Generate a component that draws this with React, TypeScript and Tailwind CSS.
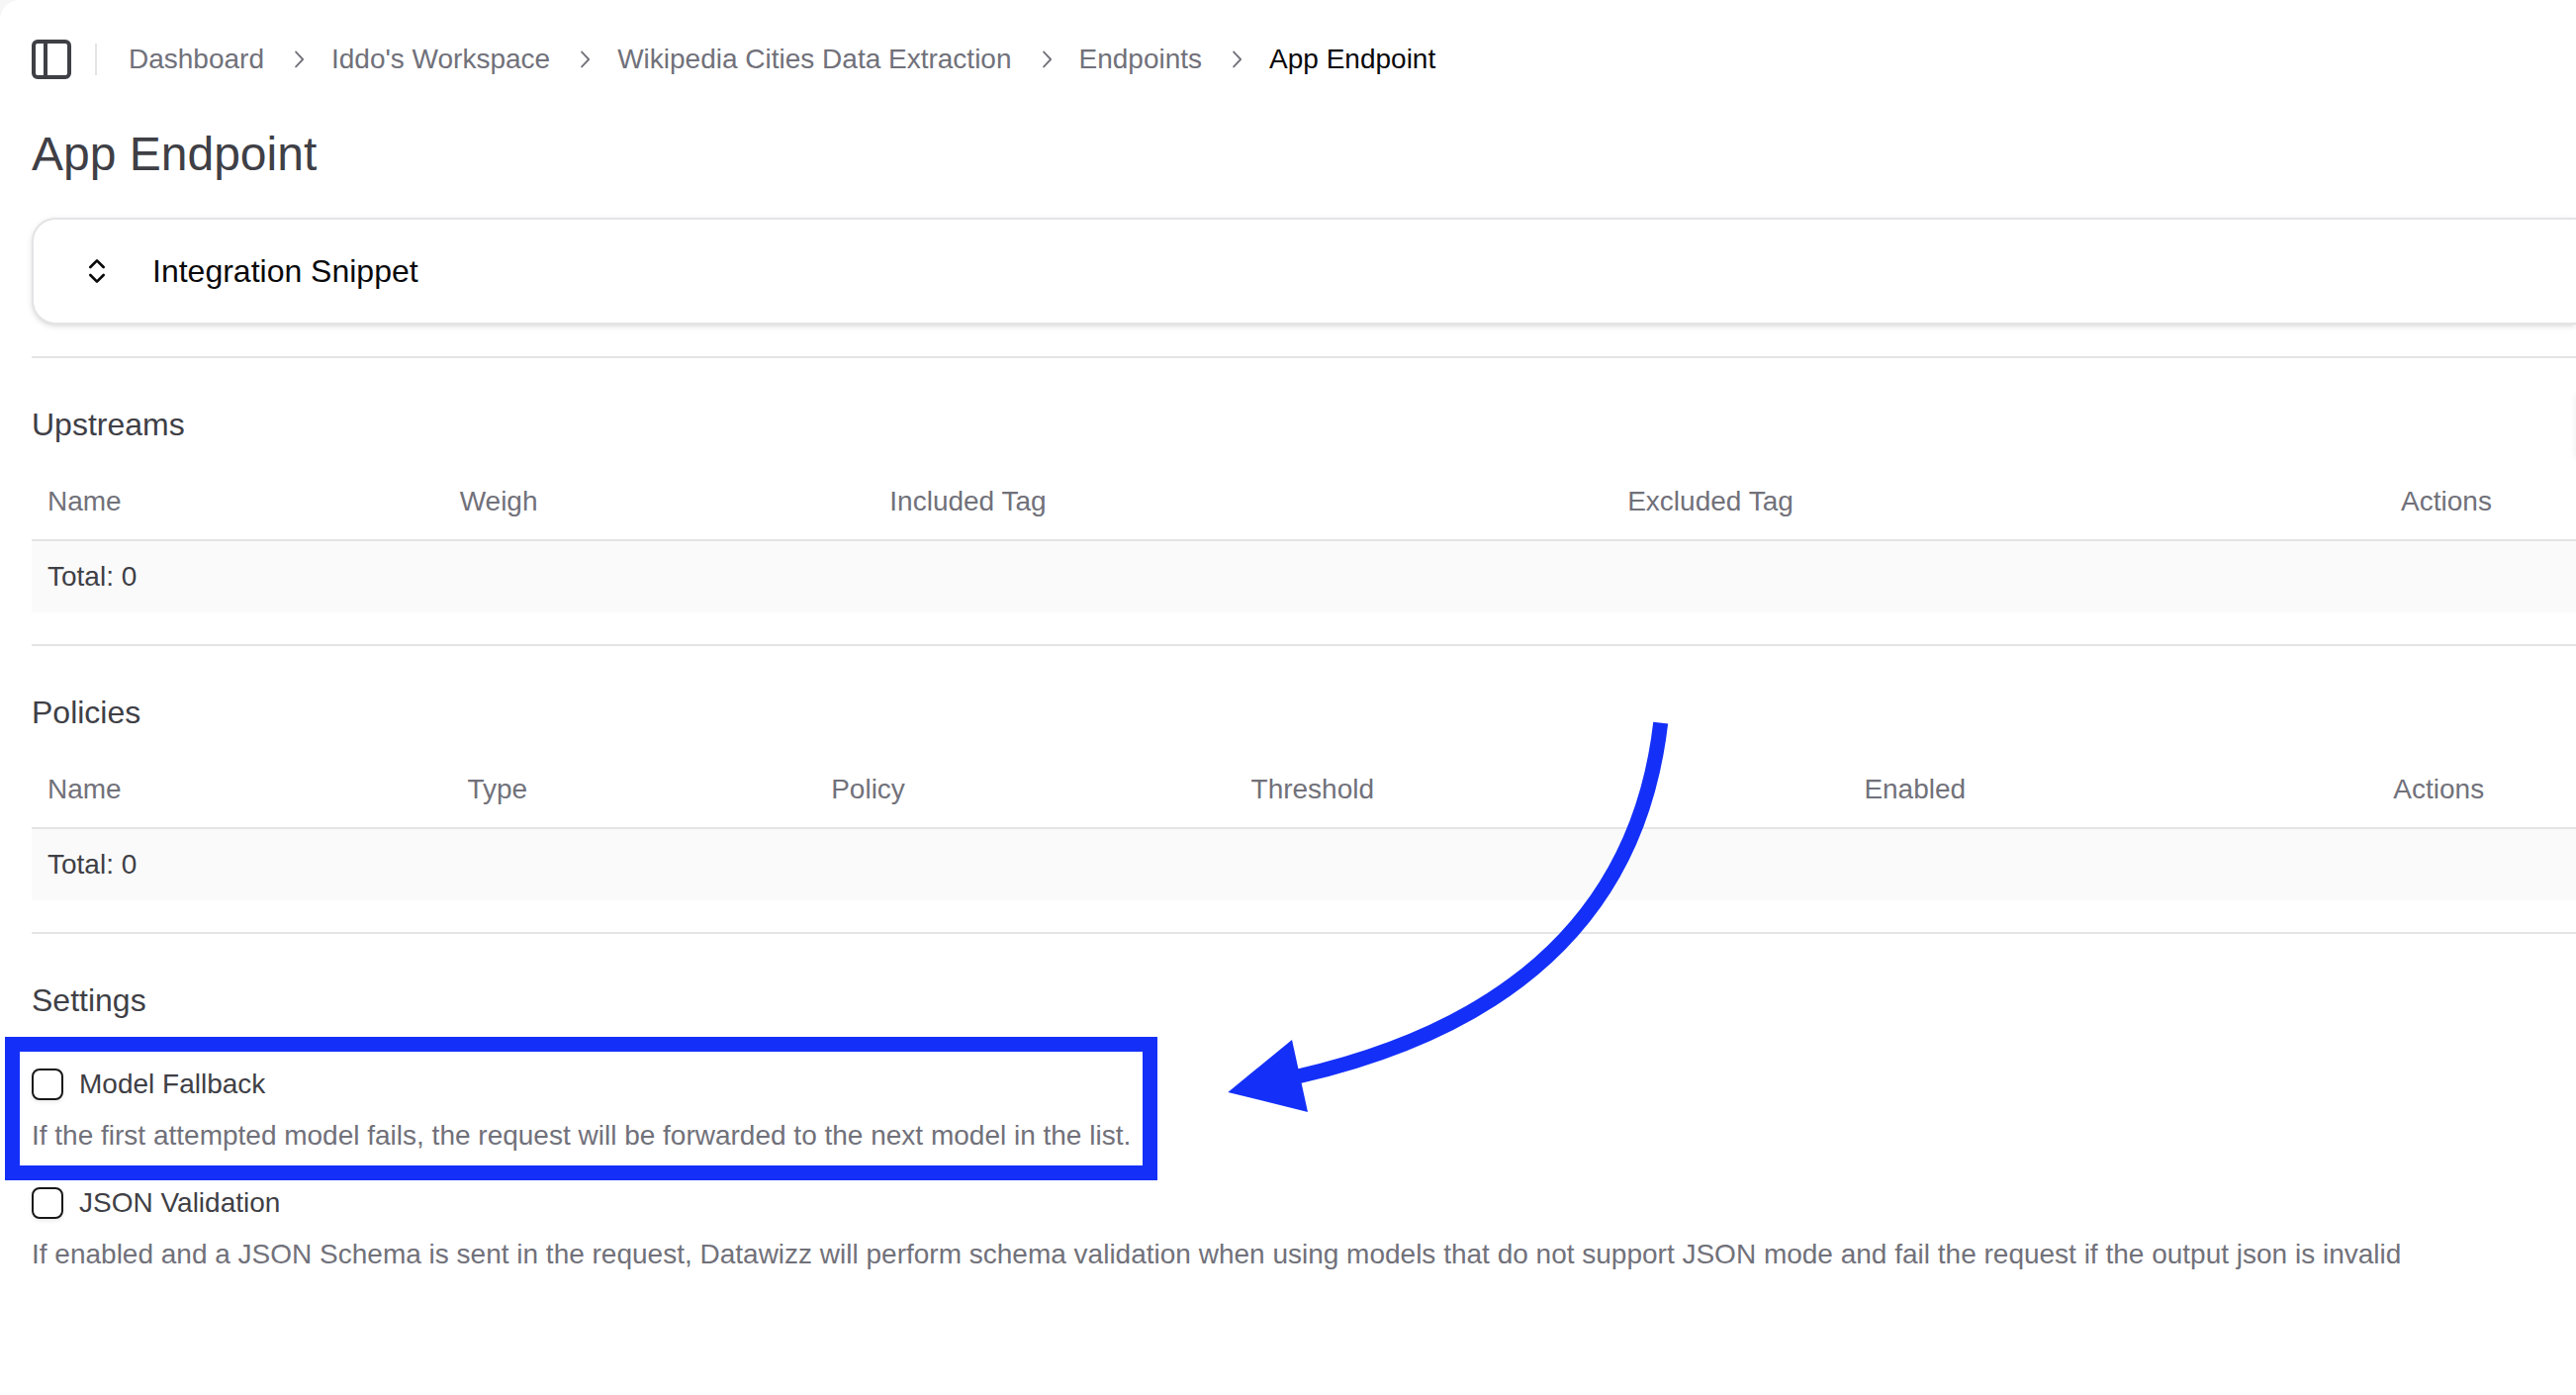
import { Fragment, useState } from 'react';
import type { ReactNode } from 'react';
import { ChevronsUpDown, PanelLeft } from 'lucide-react';

const crumbs = ['Dashboard', "Iddo's Workspace", 'Wikipedia Cities Data Extraction', 'Endpoints'];

type Column = { title: string; width: string };

const upstreamColumns: Column[] = [
  { title: 'Name', width: 'w-[16.2%]' },
  { title: 'Weigh', width: 'w-[16.9%]' },
  { title: 'Included Tag', width: 'w-[29%]' },
  { title: 'Excluded Tag', width: 'w-[30.4%]' },
  { title: 'Actions', width: 'w-[7.5%]' },
];

const policyColumns: Column[] = [
  { title: 'Name', width: 'w-[16.5%]' },
  { title: 'Type', width: 'w-[14.3%]' },
  { title: 'Policy', width: 'w-[16.5%]' },
  { title: 'Threshold', width: 'w-[24.1%]' },
  { title: 'Enabled', width: 'w-[20.8%]' },
  { title: 'Actions', width: 'w-[7.8%]' },
];

function Chevron() {
  return (
    <svg viewBox="0 0 15 15" className="size-7 shrink-0" fill="currentColor" aria-hidden="true">
      <path
        fillRule="evenodd"
        clipRule="evenodd"
        d="M6.1584 3.13508C6.35985 2.94621 6.67627 2.95642 6.86514 3.15788L10.6151 7.15788C10.7954 7.3502 10.7954 7.64949 10.6151 7.84182L6.86514 11.8418C6.67627 12.0433 6.35985 12.0535 6.1584 11.8646C5.95694 11.6757 5.94673 11.3593 6.1356 11.1579L9.565 7.49985L6.1356 3.84182C5.94673 3.64036 5.95694 3.32394 6.1584 3.13508Z"
      />
    </svg>
  );
}

function Section({ title, action, children }: { title: string; action?: ReactNode; children: ReactNode }) {
  return (
    <section className="border-t-2 border-[#e4e4e7] pt-8">
      <div className="flex h-18 items-center justify-between pb-0.5">
        <h2 className="text-[32px] leading-12 text-[#3f3f46]">{title}</h2>
        {action}
      </div>
      {children}
    </section>
  );
}

function DataTable({ columns, label }: { columns: Column[]; label: string }) {
  return (
    <table aria-label={label} className="mb-8 w-full table-fixed border-separate border-spacing-0 text-left">
      <thead>
        <tr>
          {columns.map((column) => (
            <th
              key={column.title}
              scope="col"
              className={`${column.width} h-[81px] border-b-2 border-[#e4e4e7] px-4 pt-0.5 pb-0 align-middle font-normal whitespace-nowrap text-[#71717a]`}
            >
              {column.title}
            </th>
          ))}
        </tr>
      </thead>
      <tfoot>
        <tr>
          <td colSpan={columns.length} className="bg-[#fafafa] p-4">
            Total: 0
          </td>
        </tr>
      </tfoot>
    </table>
  );
}

function Setting({
  id,
  label,
  description,
  highlighted,
}: {
  id: string;
  label: string;
  description: string;
  highlighted?: boolean;
}) {
  const [checked, setChecked] = useState(false);
  return (
    <div className="relative flex w-fit flex-col gap-4">
      <div className="flex h-8 items-center gap-4">
        <input
          id={id}
          type="checkbox"
          checked={checked}
          onChange={(event) => setChecked(event.target.checked)}
          aria-describedby={`${id}-description`}
          className="size-8 appearance-none rounded-lg border-2 border-[#18181b] bg-white shadow-[0_2px_4px_rgba(0,0,0,0.08)] checked:bg-[#18181b]"
        />
        <label htmlFor={id}>{label}</label>
      </div>
      <p id={`${id}-description`} className="whitespace-nowrap text-[#71717a]">
        {description}
      </p>
      {highlighted && (
        <div className="pointer-events-none absolute -inset-x-[27px] -top-8 -bottom-[25px] border-[15px] border-[#1430f8]" />
      )}
    </div>
  );
}

export default function App() {
  return (
    <div className="min-h-screen overflow-hidden bg-[#f6f6f6] font-['Liberation_Sans',Arial,sans-serif] text-[28px] leading-10 text-[#3f3f46]">
      <main className="relative min-h-screen rounded-tl-[20px] bg-white pl-8">
        <header className="flex h-[124px] items-center pb-1">
          <button type="button" aria-label="Toggle Sidebar" className="-ml-1 text-[#3f3f46]">
            <PanelLeft className="size-12" />
          </button>
          <div className="ml-5 h-8 w-[2px] bg-[#e4e4e7]" />
          <nav aria-label="Breadcrumb" className="ml-8">
            <ol className="flex items-center gap-5 whitespace-nowrap text-[#71717a]">
              {crumbs.map((crumb) => (
                <Fragment key={crumb}>
                  <li>
                    <a href="#">{crumb}</a>
                  </li>
                  <li aria-hidden="true">
                    <Chevron />
                  </li>
                </Fragment>
              ))}
              <li aria-current="page" className="text-[#09090b]">
                App Endpoint
              </li>
            </ol>
          </nav>
        </header>

        <h1 className="text-[48px] leading-16">App Endpoint</h1>

        <div className="my-8 rounded-l-3xl border-2 border-r-0 border-[#e4e4e7] bg-white shadow-[0_2px_6px_rgba(0,0,0,0.1),0_2px_4px_-2px_rgba(0,0,0,0.1)]">
          <button type="button" className="flex h-26 w-full items-center gap-10 pl-12 text-[32px] text-[#09090b]">
            <ChevronsUpDown className="size-8" />
            Integration Snippet
          </button>
        </div>

        <Section
          title="Upstreams"
          action={<div className="-mr-1 h-16 w-1 shadow-[0_2px_6px_rgba(0,0,0,0.1)]" aria-hidden="true" />}
        >
          <DataTable columns={upstreamColumns} label="Upstreams" />
        </Section>

        <Section title="Policies">
          <DataTable columns={policyColumns} label="Policies" />
        </Section>

        <Section title="Settings">
          <div className="flex flex-col gap-8 py-8">
            <Setting
              id="model-fallback"
              label="Model Fallback"
              description="If the first attempted model fails, the request will be forwarded to the next model in the list."
              highlighted
            />
            <Setting
              id="json-validation"
              label="JSON Validation"
              description="If enabled and a JSON Schema is sent in the request, Datawizz will perform schema validation when using models that do not support JSON mode and fail the request if the output json is invalid"
            />
          </div>
        </Section>

        <svg
          viewBox="1240 728 448 400"
          className="pointer-events-none absolute top-[728px] left-[1240px] h-[400px] w-[448px]"
          aria-hidden="true"
        >
          <path d="M1678.7 730.7Q1646 1011.5 1312 1088" fill="none" stroke="#1430f8" strokeWidth="15" />
          <path d="M1241.3 1104L1306 1051L1322 1124Z" fill="#1430f8" />
        </svg>
      </main>
    </div>
  );
}
